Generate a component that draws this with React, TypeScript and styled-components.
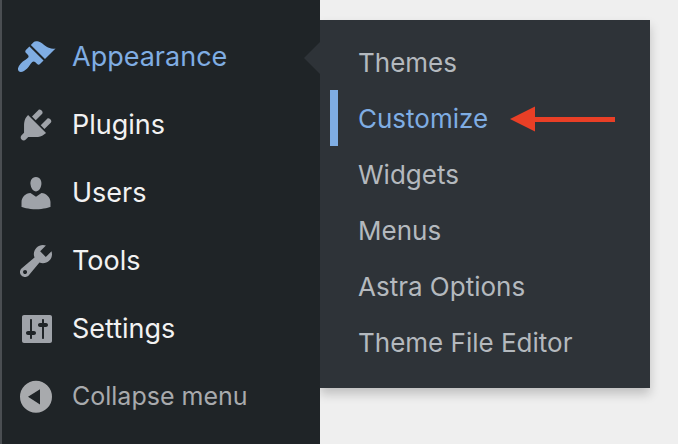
import React from "react";
import styled, { createGlobalStyle } from "styled-components";

const GlobalStyle = createGlobalStyle`
  *, *::before, *::after { box-sizing: border-box; }
  html, body, #root { height: 100%; }
  body {
    margin: 0;
    background: #efefef;
    font-family: Inter, "Liberation Sans", sans-serif;
  }
`;

const Page = styled.div`
  display: flex;
  align-items: flex-start;
  min-height: 100%;
`;

const Sidebar = styled.nav`
  position: relative;
  flex: 0 0 320px;
  align-self: stretch;
  min-height: 100vh;
  padding-top: 23px;
  border-left: 2px solid #4a4e52;
  background: #1f2427;
`;

const MenuList = styled.ul`
  margin: 0;
  padding: 0;
  list-style: none;
`;

const MenuItem = styled.li`
  position: relative;
`;

const MenuLink = styled.a<{ $active?: boolean }>`
  display: flex;
  align-items: center;
  gap: 16px;
  height: 68px;
  padding-left: 14px;
  color: ${(p) => (p.$active ? "#7fade3" : "#f2f2f2")};
  font-size: 27px;
  line-height: 36px;
  text-decoration: none;

  svg {
    color: ${(p) => (p.$active ? "#7fade3" : "#9fa3a9")};
  }
`;

const Pointer = styled.span`
  position: absolute;
  top: 19px;
  right: 0;
  border: 16px solid transparent;
  border-left-width: 0;
  border-right-color: #2e3338;
`;

const CollapseButton = styled.button`
  display: flex;
  align-items: center;
  gap: 16px;
  width: 100%;
  height: 66px;
  padding: 0 0 0 14px;
  border: 0;
  background: none;
  color: #a8aaad;
  font: inherit;
  font-size: 25px;
  line-height: 36px;
  cursor: pointer;
`;

const Icon = styled.svg`
  flex: none;
  width: 40px;
  height: 40px;
  fill: currentColor;
`;

const Flyout = styled.nav`
  flex: 0 1 330px;
  margin-top: 20px;
  padding: 14px 0 18px 10px;
  background: #2e3338;
  box-shadow: 0 6px 10px rgba(0, 0, 0, 0.2);
`;

const FlyoutLink = styled.a<{ $active?: boolean }>`
  display: flex;
  align-items: center;
  gap: 22px;
  height: 56px;
  padding: 2px 12px 0 20px;
  border-left: 8px solid ${(p) => (p.$active ? "#7fade3" : "transparent")};
  color: ${(p) => (p.$active ? "#7fade3" : "#b4b9be")};
  font-size: 26px;
  line-height: 36px;
  text-decoration: none;
  white-space: nowrap;
`;

const Arrow = styled.svg`
  flex: none;
  width: 106px;
  height: 26px;
  fill: #e93f26;
`;

const menu = [
  {
    label: "Appearance",
    active: true,
    path: "M14.48 11.06L7.41 3.99l1.5-1.5c.5-.56 2.3-.47 3.51.32 1.21.8 1.43 1.28 2.91 2.1 1.18.64 2.45 1.26 4.45.85zm-.71.71L6.7 4.7 4.93 6.47c-.39.39-.39 1.02 0 1.41l1.06 1.06c.39.39.39 1.03 0 1.42-.6.6-1.43 1.11-2.21 1.69-.35.26-.7.53-1.01.84C1.43 14.23.4 16.08 1.4 17.07c.99 1 2.84-.03 4.18-1.36.31-.31.58-.66.85-1.02.57-.78 1.08-1.61 1.69-2.21.39-.39 1.02-.39 1.41 0l1.06 1.06c.39.39 1.02.39 1.41 0z",
  },
  {
    label: "Plugins",
    path: "M13.11 4.36L9.87 7.6 8 5.73l3.24-3.24c.35-.34 1.05-.2 1.56.32.52.51.66 1.21.31 1.55zm-8 1.77l.91-1.12 9.01 9.01-1.19.84c-.71.71-2.63 1.16-3.82 1.16H6.14L4.9 17.26c-.59.59-1.54.59-2.12 0-.59-.58-.59-1.53 0-2.12l1.24-1.24v-3.88c0-1.13.4-3.19 1.09-3.89zm7.26 3.97l3.24-3.24c.34-.35 1.04-.21 1.55.31.52.51.66 1.21.31 1.55l-3.24 3.25z",
  },
  {
    label: "Users",
    path: "M10 9.25c-2.27 0-2.73-3.44-2.73-3.44C7 4.02 7.82 2 9.97 2c2.16 0 2.98 2.02 2.71 3.81 0 0-.41 3.44-2.68 3.44zm0 2.57L12.72 10c2.39 0 4.52 2.33 4.52 4.53v2.49s-3.65 1.13-7.24 1.13c-3.65 0-7.24-1.13-7.24-1.13v-2.49c0-2.25 1.94-4.48 4.47-4.48z",
  },
  {
    label: "Tools",
    path: "M16.68 9.77c-1.34 1.34-3.3 1.67-4.95.99l-5.41 6.52c-.99.99-2.59.99-3.58 0s-.99-2.59 0-3.57l6.52-5.42c-.68-1.65-.35-3.61.99-4.95 1.28-1.28 3.12-1.62 4.72-1.06l-2.89 2.89 2.82 2.82 2.86-2.87c.53 1.58.18 3.39-1.08 4.65zM3.81 16.21c.4.39 1.04.39 1.43 0 .4-.4.4-1.04 0-1.43-.39-.4-1.03-.4-1.43 0-.39.39-.39 1.03 0 1.43z",
  },
  {
    label: "Settings",
    path: "M18 16V4c0-.55-.45-1-1-1H4c-.55 0-1 .45-1 1v12c0 .55.45 1 1 1h13c.55 0 1-.45 1-1zM8 11h1c.55 0 1 .45 1 1s-.45 1-1 1H8v1.5c0 .28-.22.5-.5.5s-.5-.22-.5-.5V13H6c-.55 0-1-.45-1-1s.45-1 1-1h1V5.5c0-.28.22-.5.5-.5s.5.22.5.5V11zm5-2h-1c-.55 0-1-.45-1-1s.45-1 1-1h1V5.5c0-.28.22-.5.5-.5s.5.22.5.5V7h1c.55 0 1 .45 1 1s-.45 1-1 1h-1v5.5c0 .28-.22.5-.5.5s-.5-.22-.5-.5V9z",
  },
];

const submenu = ["Themes", "Customize", "Widgets", "Menus", "Astra Options", "Theme File Editor"];

export default function App() {
  return (
    <>
      <GlobalStyle />
      <Page>
        <Sidebar aria-label="Main menu">
          <MenuList>
            {menu.map(({ label, active, path }) => (
              <MenuItem key={label}>
                <MenuLink href="#" $active={active}>
                  <Icon viewBox="0 0 20 20" aria-hidden="true">
                    <path d={path} />
                  </Icon>
                  {label}
                </MenuLink>
                {active && <Pointer />}
              </MenuItem>
            ))}
          </MenuList>
          <CollapseButton type="button">
            <Icon viewBox="0 0 20 20" aria-hidden="true">
              <path fillRule="evenodd" d="M10 2.4a8 8 0 1 1 0 16 8 8 0 0 1 0-16zM12 6.6v7.6L6 10.4z" />
            </Icon>
            Collapse menu
          </CollapseButton>
        </Sidebar>
        <Flyout aria-label="Appearance">
          <MenuList>
            {submenu.map((label) => (
              <li key={label}>
                <FlyoutLink href="#" $active={label === "Customize"}>
                  {label}
                  {label === "Customize" && (
                    <Arrow viewBox="0 0 106 26" aria-hidden="true">
                      <path d="M0 13L25 0.5V11H105V16H25V25.5z" />
                    </Arrow>
                  )}
                </FlyoutLink>
              </li>
            ))}
          </MenuList>
        </Flyout>
      </Page>
    </>
  );
}
